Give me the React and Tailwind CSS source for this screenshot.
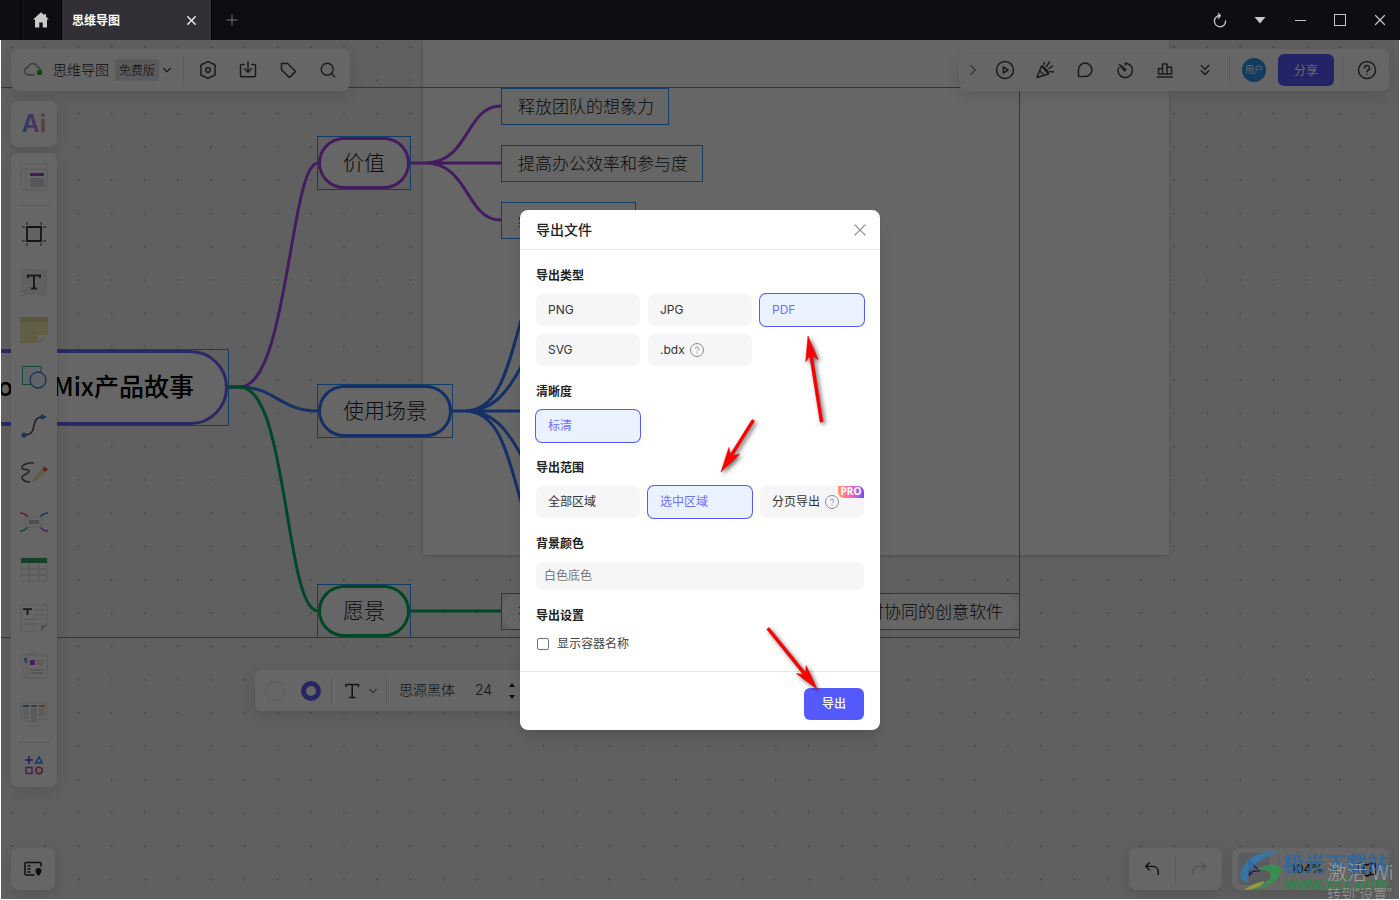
import React from "react";
import { ChevronDown, ChevronRight, ChevronsDown, Search, X, Plus } from "lucide-react";

const uiFont = "font-['Inter','Noto_Sans_CJK_SC',sans-serif]";

function Icon({ size = 20, width = 1.5, children }) {
  return (
    <svg
      width={size}
      height={size}
      viewBox="0 0 20 20"
      fill="none"
      stroke="currentColor"
      strokeWidth={width}
      strokeLinecap="round"
      strokeLinejoin="round"
      aria-hidden="true"
    >
      {children}
    </svg>
  );
}

function IconButton({ label, children }) {
  return (
    <button aria-label={label} className="flex h-10 w-10 items-center justify-center text-[#444]">
      {children}
    </button>
  );
}

function Divider() {
  return <div className="h-7 w-px bg-[#e4e4e4]" />;
}

function TitleBar() {
  return (
    <header className="flex h-10 shrink-0 items-stretch bg-[#0f0c13] text-[#c8c8c8]">
      <button aria-label="主页" className="ml-5 flex w-[42px] items-center justify-center border-x border-black">
        <svg width="18" height="18" viewBox="0 0 18 18" fill="currentColor">
          <path d="M9 1.2 1 8.4h2V16.5h4.3v-5h3.4v5H15V8.4h2L14 5.7V3h-1.6v1.3z" />
        </svg>
      </button>
      <div className="flex w-[149px] items-center justify-between bg-[#322f35] pr-3 pl-[10px] text-white">
        <span className="text-xs font-bold">思维导图</span>
        <button aria-label="关闭标签">
          <X size={15} strokeWidth={2} />
        </button>
      </div>
      <button aria-label="新建标签" className="flex w-10 items-center justify-center border-l border-black text-[#77757a]">
        <Plus size={18} strokeWidth={1.3} />
      </button>
      <div className="ml-auto flex">
        <button aria-label="刷新" className="flex w-10 items-center justify-center">
          <Icon size={16} width={1.6}>
            <path d="M10.500 4.500A7 7 0 1 0 17 11M10.500 4.500H7M10.500 4.500 8 1.800M10.500 4.500 8 7.500" />
          </Icon>
        </button>
        <button aria-label="更多" className="flex w-10 items-center justify-center">
          <svg width="12" height="7" viewBox="0 0 12 7" fill="currentColor">
            <path d="M.5 0h11L6 6.500z" />
          </svg>
        </button>
        <button aria-label="最小化" className="flex w-10 items-center justify-center">
          <span className="h-px w-[11px] bg-[#c8c8c8]" />
        </button>
        <button aria-label="最大化" className="flex w-10 items-center justify-center">
          <span className="h-3 w-3 border border-[#c8c8c8]" />
        </button>
        <button aria-label="关闭" className="flex w-10 items-center justify-center">
          <X size={18} strokeWidth={1.6} />
        </button>
      </div>
    </header>
  );
}

const nodes = [
  { text: "价值", x: 317, y: 96, w: 94, h: 54, kind: "purple" },
  { text: "使用场景", x: 317, y: 344, w: 136, h: 54, kind: "blue" },
  { text: "愿景", x: 317, y: 544, w: 94, h: 54, kind: "green" },
];

const pillColor = {
  purple: "border-[#a846ee]",
  blue: "border-[#3478ff]",
  green: "border-[#00b35c]",
};

const leaves = [
  { text: "释放团队的想象力", x: 501, y: 48, w: 168 },
  { text: "提高办公效率和参与度", x: 501, y: 105, w: 202 },
  { text: "结", x: 501, y: 162, w: 135 },
];

function Canvas() {
  return (
    <div className="absolute inset-0 overflow-hidden bg-[#efefef]">
      <svg className="absolute inset-0 h-full w-full" aria-hidden="true">
        <defs>
          <pattern id="dots" x="11" y="6" width="33.200" height="33.300" patternUnits="userSpaceOnUse">
            <rect width="2" height="2" fill="#c4c4c4" />
          </pattern>
        </defs>
        <rect width="100%" height="100%" fill="url(#dots)" />
      </svg>
      <div className="absolute top-0 left-[423px] h-[515px] w-[746px] bg-white shadow-[0_1px_3px_#0003]" />
      <svg className="absolute inset-0 h-full w-full" fill="none" strokeWidth="3" aria-hidden="true">
        <g stroke="#a846ee">
          <path d="M229 347h11C288 347 290 123 318 123" />
          <path d="M410 123h15C470 123 465 66 501 66M410 123h91M425 123C470 123 465 180 501 180" />
        </g>
        <g stroke="#3478ff">
          <path d="M229 347h11C275 347 280 371 318 371" />
          <path d="M452 371h70M465 371C500 371 508 325 522 277M465 371C492 371 506 355 522 325M465 371C500 371 508 417 522 465M465 371C492 371 506 387 522 417" />
        </g>
        <g stroke="#00b35c">
          <path d="M229 347h11C288 347 285 571 318 571M410 571h91" />
        </g>
      </svg>
      <div className="absolute top-[47px] -left-2 h-[551px] w-[1028px] border border-[#2b9aff]" />
      <div className="absolute top-[309px] -left-24 h-[77px] w-[325px] border border-[#2b9aff]">
        <div className="flex h-full items-center justify-end rounded-full border-3 border-[#6b64ff] bg-white pr-[31px] pb-1 text-[25px] font-medium text-black">
          BoardMix产品故事
        </div>
      </div>
      {nodes.map((n) => (
        <div
          key={n.text}
          className="absolute border border-[#2b9aff]"
          style={{ left: n.x, top: n.y, width: n.w, height: n.h }}
        >
          <div
            className={`flex h-full items-center justify-center rounded-full border-3 bg-white pb-0.5 text-[21px] font-light text-[#222] ${pillColor[n.kind]}`}
          >
            {n.text}
          </div>
        </div>
      ))}
      {leaves.map((n) => (
        <div
          key={n.text}
          className="absolute flex h-[37px] items-center border border-[#2b9aff] bg-white pb-0.5 pl-4 text-[17px] font-light whitespace-nowrap text-[#222]"
          style={{ left: n.x, top: n.y, width: n.w }}
        >
          {n.text}
        </div>
      ))}
      <div className="absolute top-[553px] left-[501px] h-[37px] w-[519px] border border-[#2b9aff]">
        <div className="flex h-full items-center justify-between rounded-full bg-white px-4 pb-0.5 text-[17px] font-light text-[#222]">
          <span>打</span>
          <span>时协同的创意软件</span>
        </div>
      </div>
    </div>
  );
}

const panel = "rounded-lg bg-white shadow-[0_4px_16px_#0000001f]";

function FileBar() {
  return (
    <div className={`flex h-[42px] items-center pr-0.5 pl-3 text-[#444] ${panel}`}>
      <svg width="20" height="16" viewBox="0 0 20 16" fill="none" aria-hidden="true">
        <path
          d="M11 13H5.500A4 4 0 0 1 5 5.100 5 5 0 0 1 14.500 5a3.500 3.500 0 0 1 2.800 2.500"
          stroke="#888"
          strokeWidth="1.300"
          strokeLinecap="round"
        />
        <circle cx="16.500" cy="10.500" r="2.700" fill="#3fae10" />
      </svg>
      <span className="ml-[10px] pb-0.5 text-sm font-light text-[#222]">思维导图</span>
      <span className="ml-1.5 flex h-[22px] w-11 items-center justify-center rounded bg-[#dfe3e8] text-xs font-light text-[#222]">
        免费版
      </span>
      <button aria-label="展开" className="flex w-4 justify-center">
        <ChevronDown size={14} strokeWidth={2} />
      </button>
      <div className="mr-1 ml-2">
        <Divider />
      </div>
      <IconButton label="设置">
        <Icon>
          <path d="M7.800 2.600q2.200-1.600 4.400 0 1.100 1.200 2.700 1.100 2.400.5 2.300 3-.5 1.600 0 3.300-.5 0 0 3.300-.1 2.500-2.300 3-1.600-.1-2.700 1.100-2.200 1.600-4.400 0-1.100-1.200-2.700-1.100-2.400-.5-2.300-3 .5-1.700 0-3.300.5-1.700 0-3.300-.1-2.500 2.300-3 1.600.1 2.700-1.100z" />
          <circle cx="10" cy="10" r="2.300" />
        </Icon>
      </IconButton>
      <IconButton label="导出">
        <Icon>
          <path d="M6 4.500H3.500a1 1 0 0 0-1 1v10.200a1 1 0 0 0 1 1h13a1 1 0 0 0 1-1V5.500a1 1 0 0 0-1-1H14M10 2v10M6.500 8.700 10 12.200l3.500-3.500" />
        </Icon>
      </IconButton>
      <IconButton label="标签">
        <Icon>
          <path d="M3.500 3.500h6.200l7.200 7.200a1 1 0 0 1 0 1.400l-4.800 4.800a1 1 0 0 1-1.400 0L3.500 9.700z" />
        </Icon>
      </IconButton>
      <IconButton label="搜索">
        <Search size={18} strokeWidth={1.8} />
      </IconButton>
    </div>
  );
}

function ShareBar() {
  return (
    <div className={`flex h-[42px] items-center pr-[10px] ${panel}`}>
      <button aria-label="收起" className="flex w-[26px] justify-center pl-0.5 text-[#888]">
        <ChevronRight size={18} strokeWidth={1.5} />
      </button>
      <IconButton label="演示">
        <Icon>
          <circle cx="10" cy="10" r="8.500" />
          <path d="M8.300 7v6l4.700-3z" />
        </Icon>
      </IconButton>
      <IconButton label="庆祝">
        <Icon>
          <path d="M6.500 6 2 17.500 13.500 14zM6.500 6c1-.8 7.500 5.500 7 8M4.800 11l4.500 4.300M9 4.500V2.500M11.500 6.500l3-4.500M14 8.500l3.500-2.500M14.800 11.500l3.700.5" />
        </Icon>
      </IconButton>
      <IconButton label="评论">
        <Icon>
          <path d="M3.500 16.500V10A6.700 6.700 0 1 1 10.200 16.500z" />
        </Icon>
      </IconButton>
      <IconButton label="计时">
        <Icon>
          <path d="M10.500 3.200a7.200 7.200 0 1 1-7 4.500" />
          <path d="M4.500 4.500 10.800 9.500l-1.400 1.400z" />
          <path d="M10.500 3.200V5" />
        </Icon>
      </IconButton>
      <IconButton label="投票">
        <Icon>
          <path d="M2.500 17h15M3.500 14V8.500h4V14zM7.500 14V4h4.500v10zM12 14V7h4.500v7z" />
        </Icon>
      </IconButton>
      <IconButton label="更多工具">
        <ChevronsDown size={18} strokeWidth={2} />
      </IconButton>
      <div className="ml-1">
        <Divider />
      </div>
      <span className="ml-3 flex h-6 w-6 items-center justify-center rounded-full bg-[#2d97e8] text-[9px] text-white">
        用户
      </span>
      <button className="ml-3 h-8 w-14 rounded-md bg-[#555aff] text-xs text-white">分享</button>
      <div className="mr-3 ml-2">
        <Divider />
      </div>
      <button aria-label="帮助" className="flex w-6 justify-center text-[#444]">
        <Icon>
          <circle cx="10" cy="10" r="8.500" />
          <path d="M7.500 8a2.500 2.500 0 1 1 3.500 2.300c-.7.300-1 .7-1 1.400M10 14.200v.1" />
        </Icon>
      </button>
    </div>
  );
}

const tools = [
  {
    name: "画框",
    art: (
      <>
        <path d="M7 2v3M21 2v3M7 23v3M21 23v3M2 7h3M2 21h3M23 7h3M23 21h3" stroke="#999" strokeWidth="2" />
        <path d="M7 7h14v14H7z" fill="#f4f4f4" stroke="#333" strokeWidth="1.800" />
      </>
    ),
  },
  {
    name: "文本",
    art: (
      <>
        <path d="M2 2h24v24H2z" fill="#f0f0f0" stroke="#e0e0e0" />
        <path d="M0 0h4v4H0zM24 0h4v4h-4zM0 24h4v4H0zM24 24h4v4h-4z" fill="#fff" stroke="#e6e6e6" />
        <path d="M8 10V7.500h12V10M14 7.500V20M11 20.500h6" stroke="#444" strokeWidth="2" />
      </>
    ),
  },
  {
    name: "便签",
    art: (
      <>
        <path d="M0 1h28v18l-8 8H0z" fill="#f2ebad" />
        <path d="M0 1h28v5H0z" fill="#e2d990" />
        <path d="M18 27v-8h9z" fill="#fff" />
      </>
    ),
  },
  {
    name: "形状",
    art: (
      <>
        <path d="M2.500 2.500H21v18H2.500z" fill="#f1fffc" stroke="#2bb59a" />
        <circle cx="18" cy="16" r="8" fill="#f4f8ff" stroke="#3a78d8" strokeWidth="1.300" />
      </>
    ),
  },
  {
    name: "连接线",
    art: (
      <>
        <path d="M4 23c16 0 4-18 19-18" stroke="#444" strokeWidth="1.500" />
        <circle cx="4" cy="23" r="2.600" fill="#3289e8" />
        <path d="M21 2l6 3-6 3z" fill="#3289e8" />
      </>
    ),
  },
  {
    name: "画笔",
    art: (
      <>
        <path d="M14 3C9 2 1 5 2 8s7 0 7 3-8 4-7 7 4 4 8 4" stroke="#555" strokeWidth="1.500" />
        <path d="M11 23l2-5L24 7l4 3-12 11z" fill="#efe6a0" stroke="#fff" />
        <path d="M22 9l2.500-2.500 3.500 3L25 12z" fill="#e5695b" />
      </>
    ),
  },
  {
    name: "思维导图",
    art: (
      <>
        <path d="M0 5c5 0 7 2 9 6" stroke="#d84674" strokeWidth="1.500" />
        <path d="M0 23c5 0 7-2 9-6" stroke="#20a68d" strokeWidth="1.500" />
        <path d="M28 5c-5 0-7 2-9 6" stroke="#3289e8" strokeWidth="1.500" />
        <path d="M28 23c-5 0-7-2-9-6" stroke="#a54ad3" strokeWidth="1.500" />
        <rect x="6" y="9" width="16" height="10" rx="1" fill="#fff" stroke="#e6e6e6" />
        <path d="M9 12h10v4H9z" fill="#c4c4c4" />
      </>
    ),
  },
  {
    name: "表格",
    art: (
      <>
        <path d="M1 2h26v23H1z" fill="#fff" stroke="#e0e0e0" />
        <path d="M1 2h26v5H1z" fill="#36a269" />
        <path d="M1 13h26M1 19h26M9 7v18M19 7v18" stroke="#dedede" strokeWidth="1.500" />
      </>
    ),
  },
  {
    name: "文档",
    art: (
      <>
        <path d="M1 1h26v20l-6 6H1z" fill="#fff" stroke="#e2e2e2" />
        <path d="M21 27v-6h6z" fill="#c8c8c8" />
        <path d="M4 6V5h7v1M7.500 5v6" stroke="#333" strokeWidth="1.700" />
        <path d="M14 6h10M14 11h10M4 15h20M4 20h14" stroke="#d8d8d8" />
      </>
    ),
  },
  {
    name: "卡片",
    art: (
      <>
        <path d="M0 3l16-3 3 21-14 5z" fill="#fff" stroke="#e6e6e6" />
        <path d="M4 6l3 0v5l-2 0z" fill="#3b93dd" />
        <path d="M7 3h20v23H7z" fill="#fff" stroke="#dedede" />
        <path d="M10 8h5v5h-5z" fill="#b14be0" />
        <path d="M17 9h7M17 12h6M10 18h14M10 21h14" stroke="#bbb" />
      </>
    ),
  },
  {
    name: "看板",
    art: (
      <>
        <path d="M1 3h26v16h-8v7H9v-5H1z" fill="#fff" stroke="#e0e0e0" />
        <path d="M3 5h6v2H3z" fill="#438bd2" />
        <path d="M11 5h6v2h-6z" fill="#999" />
        <path d="M19 5h6v2h-6z" fill="#d8923f" />
        <path d="M3 8h6v11H3z" fill="#e2e8f4" />
        <path d="M11 8h6v15h-6z" fill="#e4e4e4" />
        <path d="M19 8h6v8h-6z" fill="#f3e2d4" />
      </>
    ),
  },
];

function ToolPanel() {
  return (
    <nav className={`mt-1.5 flex w-[46px] flex-col items-center ${panel}`}>
      <button aria-label="模板" className="flex h-12 items-center">
        <svg width="28" height="28" viewBox="0 0 28 28" fill="none">
          <rect x="1" y="1" width="26" height="26" rx="1" fill="#fff" stroke="#e2e2e2" />
          <path d="M1 6h26M6 6v21" stroke="#e2e2e2" />
          <path d="M10 10h14v3H10z" fill="#a54ad3" />
          <path d="M10 15h14v9H10z" fill="#d6d9de" />
        </svg>
      </button>
      <div className="my-1 h-px w-8 bg-[#e0e0e0]" />
      {tools.map((tool) => (
        <button key={tool.name} aria-label={tool.name} className="flex h-12 items-center">
          <svg width="28" height="28" viewBox="0 0 28 28" fill="none">
            {tool.art}
          </svg>
        </button>
      ))}
      <div className="mt-1 h-px w-8 bg-[#e0e0e0]" />
      <button aria-label="更多应用" className="flex h-11 items-center">
        <svg width="20" height="20" viewBox="0 0 20 20" fill="none" strokeWidth="1.500">
          <path d="M5 1v8M1 5h8" stroke="#4f50df" />
          <path d="M15 2l3.300 6h-6.600z" stroke="#3289e8" />
          <path d="M2 12.500h6v6H2z" stroke="#b04bd8" />
          <circle cx="15" cy="15.500" r="3.200" stroke="#d84674" />
        </svg>
      </button>
    </nav>
  );
}

function TextBar() {
  return (
    <div
      className={`absolute top-[630px] left-[255px] flex h-[41px] items-center pr-10 pl-[10px] text-[#333] ${uiFont} ${panel}`}
    >
      <button aria-label="填充颜色" className="h-5 w-5 rounded-full border border-[#dcdcdc]" />
      <button aria-label="边框颜色" className="ml-4 h-5 w-5 rounded-full border-5 border-[#6460f5] bg-white" />
      <div className="ml-[10px]">
        <Divider />
      </div>
      <button aria-label="文字样式" className="ml-[10px] flex items-center">
        <Icon>
          <path d="M4 5.500V3.500h12.500v2M10.200 3.500V16.500M7.500 16.500H13" />
        </Icon>
        <ChevronDown className="ml-1 text-[#888]" size={14} strokeWidth={2} />
      </button>
      <div className="ml-1.5">
        <Divider />
      </div>
      <span className="ml-3 pb-0.5 text-sm font-light">思源黑体</span>
      <span className="ml-5 pb-0.5 text-sm font-light">24</span>
      <svg className="ml-4" width="8" height="18" viewBox="0 0 8 18" fill="#222" aria-hidden="true">
        <path d="M4 1l3 4H1zM4 17l3-4H1z" />
      </svg>
    </div>
  );
}

function BottomBar() {
  return (
    <div className="mt-auto flex justify-between">
      <button aria-label="小地图" className={`flex h-[42px] w-11 items-center justify-center ${panel}`}>
        <Icon size={20}>
          <path d="M11 16H3a1 1 0 0 1-1-1V4.500a1 1 0 0 1 1-1h14a1 1 0 0 1 1 1V7M5 7h2M5 10h2M5 13h2" stroke="#222" />
          <path d="M15.500 9a3 3 0 0 0-3 3c0 2 3 5 3 5s3-3 3-5a3 3 0 0 0-3-3z" fill="#222" stroke="none" />
        </Icon>
      </button>
      <div className="flex gap-[10px]">
        <div className={`flex h-[42px] w-[93px] items-center ${panel}`}>
          <button aria-label="撤销" className="flex flex-1 justify-center text-[#222]">
            <Icon size={18}>
              <path d="M7 3 3 7l4 4M3 7h8a6 6 0 0 1 6 6v3" />
            </Icon>
          </button>
          <Divider />
          <button aria-label="重做" className="flex flex-1 justify-center text-[#ccc]">
            <Icon size={18}>
              <path d="M13 3l4 4-4 4M17 7H9a6 6 0 0 0-6 6v3" />
            </Icon>
          </button>
        </div>
        <div className={`flex h-[42px] w-[157px] items-center pr-3 pl-1.5 text-[#222] ${uiFont} ${panel}`}>
          <button aria-label="选择" className="flex h-8 w-8 items-center justify-center rounded bg-[#e4e4f4] text-[#4a45c8]">
            <Icon size={18}>
              <path d="M5 2v15l4-4.500 7-.5z" />
            </Icon>
          </button>
          <div className="mr-3 ml-2">
            <Divider />
          </div>
          <span className="text-xs">104%</span>
          <ChevronDown className="ml-1.5" size={12} strokeWidth={2} />
          <button aria-label="缩略图" className="ml-auto">
            <Icon size={20}>
              <path d="M2 4.500h4.500L10 6l3.500-1.500H18v11h-4.500L10 17l-3.500-1.500H2zM6.500 4.500v11M13.500 4.500v11" />
            </Icon>
          </button>
        </div>
      </div>
    </div>
  );
}

function Floating() {
  return (
    <div className="absolute inset-0 flex flex-col pt-[9px] pr-[11px] pb-[10px] pl-[11px]">
      <div className="flex justify-between">
        <FileBar />
        <ShareBar />
      </div>
      <div className="mt-[10px] flex flex-col">
        <button aria-label="AI 助手" className={`flex h-[46px] w-[46px] items-center justify-center ${panel}`}>
          <span
            className={`bg-linear-to-r from-[#4d9df0] via-[#b684f5] to-[#eba08c] bg-clip-text text-2xl font-bold text-transparent ${uiFont}`}
          >
            Ai
          </span>
        </button>
        <ToolPanel />
      </div>
      <BottomBar />
    </div>
  );
}

function HelpMark() {
  return (
    <svg width="14" height="14" viewBox="0 0 14 14" fill="none" stroke="#8c8c8c" aria-hidden="true">
      <circle cx="7" cy="7" r="6.500" />
      <path d="M5.300 5.700a1.700 1.700 0 1 1 2.500 1.500c-.5.300-.8.600-.8 1.100M7 9.600v1" />
    </svg>
  );
}

function Option({ selected, help, pro, children }) {
  return (
    <button
      aria-pressed={!!selected}
      className={`relative flex h-8 items-center gap-[5px] rounded-md px-3 text-xs ${
        selected ? "bg-[#ebf2ff] text-[#6b70ff] ring-1 ring-[#555aff]" : "bg-[#f6f6f8] text-[#333]"
      }`}
    >
      {children}
      {help && <HelpMark />}
      {pro && (
        <span className="absolute top-0 right-0 flex h-3 w-[26px] items-center justify-center rounded-tr-md rounded-bl-md bg-linear-to-r from-[#ff9a5c] via-[#ff5fb8] to-[#6a4dff] font-['Open_Sans'] text-[10px] font-bold text-white">
          PRO
        </span>
      )}
    </button>
  );
}

function Section({ title, children }) {
  return (
    <section className="mb-4">
      <h3 className="mb-2 text-xs leading-5 font-bold text-[#222]">{title}</h3>
      {children}
    </section>
  );
}

function Arrow({ x, y, length, angle }) {
  return (
    <g transform={`translate(${x} ${y}) rotate(${angle})`}>
      <path d={`M-1.500 20V${length}h3V20l4.800 5L0 0-6.300 25z`} fill="#f00" stroke="#e00000" strokeWidth=".5" />
    </g>
  );
}

function ExportDialog() {
  return (
    <div className="absolute inset-0 flex items-center justify-center">
      <div role="dialog" aria-label="导出文件" className={`relative w-[360px] rounded-lg bg-white shadow-lg ${uiFont}`}>
        <div className="flex h-10 items-center justify-between border-b border-[#e8e8e8] pr-[10px] pl-4">
          <h2 className="text-sm font-medium text-[#222]">导出文件</h2>
          <button aria-label="关闭" className="text-[#999]">
            <X size={20} strokeWidth={1.5} />
          </button>
        </div>
        <div className="px-4 pt-4 pb-px">
          <Section title="导出类型">
            <div className="grid grid-cols-3 gap-2">
              <Option>PNG</Option>
              <Option>JPG</Option>
              <Option selected>PDF</Option>
              <Option>SVG</Option>
              <Option help>.bdx</Option>
            </div>
          </Section>
          <Section title="清晰度">
            <div className="grid grid-cols-3 gap-2">
              <Option selected>标清</Option>
            </div>
          </Section>
          <Section title="导出范围">
            <div className="grid grid-cols-3 gap-2">
              <Option>全部区域</Option>
              <Option selected>选中区域</Option>
              <Option help pro>
                分页导出
              </Option>
            </div>
          </Section>
          <Section title="背景颜色">
            <select
              aria-label="背景颜色"
              className="block h-7 w-full appearance-none rounded-md bg-[#f6f6f8] px-2 text-xs text-[#777]"
            >
              <option>白色底色</option>
            </select>
          </Section>
          <Section title="导出设置">
            <label className="flex h-5 items-center gap-2 pl-px text-xs text-[#444]">
              <input type="checkbox" className="h-3 w-3 appearance-none rounded-xs border border-[#767676] bg-white" />
              显示容器名称
            </label>
          </Section>
        </div>
        <div className="flex justify-end border-t border-[#e8e8e8] px-4 pt-4 pb-[10px]">
          <button className="h-8 w-[60px] rounded-md bg-[#555aff] text-xs font-medium text-white">导出</button>
        </div>
        <svg
          className="pointer-events-none absolute inset-0 drop-shadow-[2px_2px_2px_#0009]"
          width="360"
          height="520"
          viewBox="0 0 360 520"
          aria-hidden="true"
        >
          <Arrow x={288} y={126} length={87} angle={-9} />
          <Arrow x={201} y={262} length={61} angle={-148} />
          <Arrow x={297} y={479} length={78} angle={141} />
        </svg>
      </div>
    </div>
  );
}

function Watermark() {
  return (
    <div className="pointer-events-none absolute right-0 bottom-0 h-[54px] w-[162px] overflow-hidden">
      <svg className="absolute top-1 left-0" width="46" height="44" viewBox="0 0 46 44" aria-hidden="true">
        <path d="M43 1C24-1 6 9 3 21c-2 8 2 12 8 11C6 22 18 9 43 1z" fill="#2b7db8" opacity=".75" />
        <path d="M17 20c10-7 27-8 26 1-1 9-14 17-29 19 13-6 20-12 19-16-2-4-9-5-16-4z" fill="#2d9a4c" opacity=".8" />
        <path d="M6 40c6-5 15-8 21-9-3 5-11 9-21 9z" fill="#a9a838" opacity=".8" />
      </svg>
      <div className="absolute top-0.5 left-[45px] text-[21px] leading-7 font-bold whitespace-nowrap text-[#2468a8]/80">
        极光下载站
      </div>
      <div className="absolute top-7 left-[46px] font-['Liberation_Sans'] text-base leading-5 font-bold whitespace-nowrap text-[#228a40]/80">
        www.xz7.com
      </div>
      <div className="absolute top-3 left-[89px] text-xl leading-7 font-light whitespace-nowrap text-[#b0b0b0]/80">激活 Wi</div>
      <div className="absolute top-[38px] left-[89px] font-['Noto_Sans','Noto_Sans_CJK_SC'] text-sm leading-5 font-light whitespace-nowrap text-[#b0b0b0]/80">
        转到“设置”
      </div>
    </div>
  );
}

export default function App() {
  return (
    <div className="flex h-screen flex-col overflow-hidden font-['Noto_Sans_CJK_SC',sans-serif]">
      <TitleBar />
      <main className="relative flex-1 overflow-hidden">
        <Canvas />
        <TextBar />
        <Floating />
        <div className="absolute inset-0 bg-black/60" />
        <Watermark />
        <ExportDialog />
        <div className="pointer-events-none absolute inset-0 border-x border-b border-white" />
      </main>
    </div>
  );
}
